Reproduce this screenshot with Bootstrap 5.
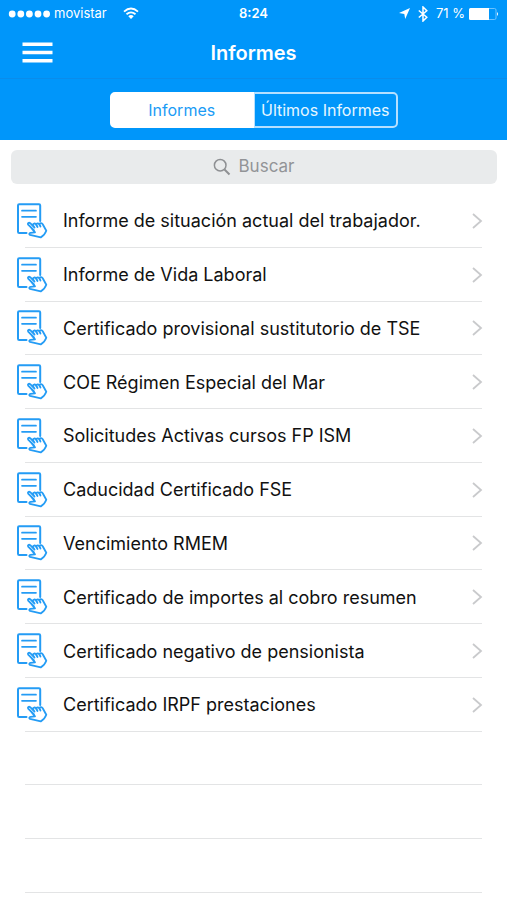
<!DOCTYPE html>
<html lang="es">
<head>
<meta charset="utf-8">
<meta name="viewport" content="width=device-width, initial-scale=1">
<title>Informes</title>
<link href="https://cdn.jsdelivr.net/npm/bootstrap@5.3.0/dist/css/bootstrap.min.css" rel="stylesheet">
<style>
:root { --brand: #0096fa; }
body { font-family: Inter, "Liberation Sans", sans-serif; color: #111; background: #fff; }
.top-area { background: var(--brand); color: #fff; }
.status-bar { height: 27px; font-size: 13px; padding: 0 8px; }
.status-bar > * { flex: 1 1 0; }
.title-bar { height: 52px; padding: 0 22px; border-bottom: 1px solid #0a8ceb; }
.title-bar > * { flex: 1 1 0; }
.title-bar h1 { font-size: 20px; font-weight: 600; }
.tab-bar { height: 61px; }
.segments { width: 288px; height: 36px; }
.segments .btn { --bs-btn-color: #e6f6ff; --bs-btn-border-color: #b5e0ff; --bs-btn-border-radius: 5px;
  --bs-btn-active-bg: #fff; --bs-btn-active-color: #1a9bf5; --bs-btn-active-border-color: #fff;
  --bs-btn-hover-color: #fff; --bs-btn-hover-border-color: #fff;
  font-size: 16px; line-height: 20px; width: 50%; border-width: 2px; }
.search-area { padding: 10px 10px 10px 11px; }
.search-box { height: 34px; background: #e9ebec; border-radius: 6px; color: #8e8e93; }
.search-box input { width: 57px; font-size: 17px; color: #111; outline: 0; }
.search-box input::placeholder { color: #929497; opacity: 1; }
.reports { padding-bottom: 7px; }
.reports li { flex: 1 0 50px; }
.reports li::after { content: ""; height: 1px; margin: 0 25px; background: #e3e4e5; }
.reports a { color: #111; font-size: 18px; padding: 1px 24px 0 16px; }
.doc-icon { width: 32px; height: 36px; margin-right: 15px; }
</style>
</head>
<body>
<svg class="d-none" aria-hidden="true">
  <symbol id="doc" viewBox="0 0 32 36">
    <g fill="none" stroke="#249cf5" stroke-width="2" stroke-linejoin="round" stroke-linecap="round">
      <path d="M24.200 18V2.400Q24.200 1.200 23 1.200H3.200Q2 1.200 2 2.400V28.800Q2 30 3.200 30H10.500"/>
      <path d="M6 7.700H20M6 13.800H20" stroke-width="1.700"/>
      <path d="M18 27.500L12.200 21.700C11.400 20.300 12.800 19.200 14.200 20.200L18.500 24.500L16.800 22C17 20.300 18.900 20 19.800 21.300L21.500 24L20.200 21.500C20.600 20 22.300 20 23.200 21.200L24.500 23.500L23.500 21C24.300 19.700 25.900 20 26.700 21.200L30.300 27.800Q28.500 32.500 24.800 34.400L14 31.900C12.800 31.200 13.200 29.900 14.500 29.800L19 29.400L15.500 25.200" stroke-width="1.800"/>
    </g>
  </symbol>
  <symbol id="chevron" viewBox="0 0 12 18"><path d="M2 2L10 9L2 16" fill="none" stroke="#c9cacc" stroke-width="1.800"/></symbol>
</svg>

<div class="d-flex flex-column min-vh-100">
  <header class="top-area">
    <div class="status-bar d-flex align-items-center">
      <div class="d-flex align-items-center">
        <svg width="42" height="10" viewBox="0 0 42 10" fill="#fff" aria-hidden="true"><circle cx="4.200" cy="5" r="3.400"/><circle cx="12.800" cy="5" r="3.400"/><circle cx="21.400" cy="5" r="3.400"/><circle cx="30" cy="5" r="3.400"/><circle cx="38.600" cy="5" r="3.400"/></svg>
        <span class="ms-1">movistar</span>
        <svg class="ms-3" width="16" height="13" viewBox="0 0 16 13" aria-label="Wi-Fi"><path d="M1 4.600Q8-1.600 15 4.600M3.500 7.300Q8 3.400 12.500 7.300" fill="none" stroke="#fff" stroke-width="1.800"/><path d="M5.300 9.200Q8 7 10.700 9.200L8 12Z" fill="#fff"/></svg>
      </div>
      <div class="text-center fw-semibold">8:24</div>
      <div class="d-flex align-items-center justify-content-end">
        <svg width="11" height="11" viewBox="0 0 11 11" fill="#fff" aria-hidden="true"><path d="M11 0L6.200 11L5.300 6L0 5Z"/></svg>
        <svg class="ms-2" width="10" height="16" viewBox="0 0 10 16" fill="none" stroke="#fff" stroke-width="1.500" aria-hidden="true"><path d="M.8 4.500L8.800 11.300L5 15V1L8.800 4.700L.8 11.500"/></svg>
        <span class="ms-2 me-1">71 %</span>
        <svg width="30" height="12" viewBox="0 0 30 12" aria-hidden="true"><rect x=".5" y=".5" width="26.500" height="11" rx="1.500" fill="none" stroke="#6cc2ff"/><path d="M1.500 0H20V12H1.500Q0 12 0 10.500V1.500Q0 0 1.500 0ZM28 4Q30 6 28 8Z" fill="#fff"/></svg>
      </div>
    </div>
    <div class="title-bar d-flex align-items-center">
      <div>
        <button type="button" class="btn border-0 p-0 d-flex" aria-label="Menú">
          <svg width="31" height="22" viewBox="0 0 31 22" fill="#fff" aria-hidden="true"><path d="M.5 .5H30.500V4H.5ZM.5 8.700H30.500V12.200H.5ZM.5 17H30.500V20.500H.5Z"/></svg>
        </button>
      </div>
      <h1 class="m-0 text-center">Informes</h1>
      <div></div>
    </div>
    <div class="tab-bar d-flex align-items-center justify-content-center">
      <div class="segments btn-group" role="group" aria-label="Vista">
        <button type="button" class="btn p-0 active" aria-pressed="true">Informes</button>
        <button type="button" class="btn p-0 text-nowrap" aria-pressed="false">Últimos Informes</button>
      </div>
    </div>
  </header>

  <main class="d-flex flex-column flex-grow-1">
    <div class="search-area">
      <label class="search-box d-flex align-items-center justify-content-center gap-2" for="search">
        <svg width="18" height="18" viewBox="0 0 18 18" fill="none" stroke="#8e9093" stroke-width="1.500" aria-hidden="true"><circle cx="7.200" cy="7.200" r="5.800"/><path d="M11.500 11.500L16.500 16.500" stroke-width="2"/></svg>
        <input id="search" type="text" class="border-0 bg-transparent p-0" placeholder="Buscar" aria-label="Buscar">
      </label>
    </div>
    <ul class="reports list-unstyled m-0 d-flex flex-column flex-grow-1">
      <li class="d-flex flex-column"><a href="#" class="d-flex flex-grow-1 align-items-center text-decoration-none"><svg class="doc-icon" aria-hidden="true"><use href="#doc"/></svg><span class="flex-grow-1">Informe de situación actual del trabajador.</span><svg width="12" height="18" aria-hidden="true"><use href="#chevron"/></svg></a></li>
      <li class="d-flex flex-column"><a href="#" class="d-flex flex-grow-1 align-items-center text-decoration-none"><svg class="doc-icon" aria-hidden="true"><use href="#doc"/></svg><span class="flex-grow-1">Informe de Vida Laboral</span><svg width="12" height="18" aria-hidden="true"><use href="#chevron"/></svg></a></li>
      <li class="d-flex flex-column"><a href="#" class="d-flex flex-grow-1 align-items-center text-decoration-none"><svg class="doc-icon" aria-hidden="true"><use href="#doc"/></svg><span class="flex-grow-1">Certificado provisional sustitutorio de TSE</span><svg width="12" height="18" aria-hidden="true"><use href="#chevron"/></svg></a></li>
      <li class="d-flex flex-column"><a href="#" class="d-flex flex-grow-1 align-items-center text-decoration-none"><svg class="doc-icon" aria-hidden="true"><use href="#doc"/></svg><span class="flex-grow-1">COE Régimen Especial del Mar</span><svg width="12" height="18" aria-hidden="true"><use href="#chevron"/></svg></a></li>
      <li class="d-flex flex-column"><a href="#" class="d-flex flex-grow-1 align-items-center text-decoration-none"><svg class="doc-icon" aria-hidden="true"><use href="#doc"/></svg><span class="flex-grow-1">Solicitudes Activas cursos FP ISM</span><svg width="12" height="18" aria-hidden="true"><use href="#chevron"/></svg></a></li>
      <li class="d-flex flex-column"><a href="#" class="d-flex flex-grow-1 align-items-center text-decoration-none"><svg class="doc-icon" aria-hidden="true"><use href="#doc"/></svg><span class="flex-grow-1">Caducidad Certificado FSE</span><svg width="12" height="18" aria-hidden="true"><use href="#chevron"/></svg></a></li>
      <li class="d-flex flex-column"><a href="#" class="d-flex flex-grow-1 align-items-center text-decoration-none"><svg class="doc-icon" aria-hidden="true"><use href="#doc"/></svg><span class="flex-grow-1">Vencimiento RMEM</span><svg width="12" height="18" aria-hidden="true"><use href="#chevron"/></svg></a></li>
      <li class="d-flex flex-column"><a href="#" class="d-flex flex-grow-1 align-items-center text-decoration-none"><svg class="doc-icon" aria-hidden="true"><use href="#doc"/></svg><span class="flex-grow-1">Certificado de importes al cobro resumen</span><svg width="12" height="18" aria-hidden="true"><use href="#chevron"/></svg></a></li>
      <li class="d-flex flex-column"><a href="#" class="d-flex flex-grow-1 align-items-center text-decoration-none"><svg class="doc-icon" aria-hidden="true"><use href="#doc"/></svg><span class="flex-grow-1">Certificado negativo de pensionista</span><svg width="12" height="18" aria-hidden="true"><use href="#chevron"/></svg></a></li>
      <li class="d-flex flex-column"><a href="#" class="d-flex flex-grow-1 align-items-center text-decoration-none"><svg class="doc-icon" aria-hidden="true"><use href="#doc"/></svg><span class="flex-grow-1">Certificado IRPF prestaciones</span><svg width="12" height="18" aria-hidden="true"><use href="#chevron"/></svg></a></li>
      <li class="d-flex flex-column justify-content-end" aria-hidden="true"></li>
      <li class="d-flex flex-column justify-content-end" aria-hidden="true"></li>
      <li class="d-flex flex-column justify-content-end" aria-hidden="true"></li>
    </ul>
  </main>
</div>
<script src="https://cdn.jsdelivr.net/npm/bootstrap@5.3.0/dist/js/bootstrap.bundle.min.js"></script>
</body>
</html>
